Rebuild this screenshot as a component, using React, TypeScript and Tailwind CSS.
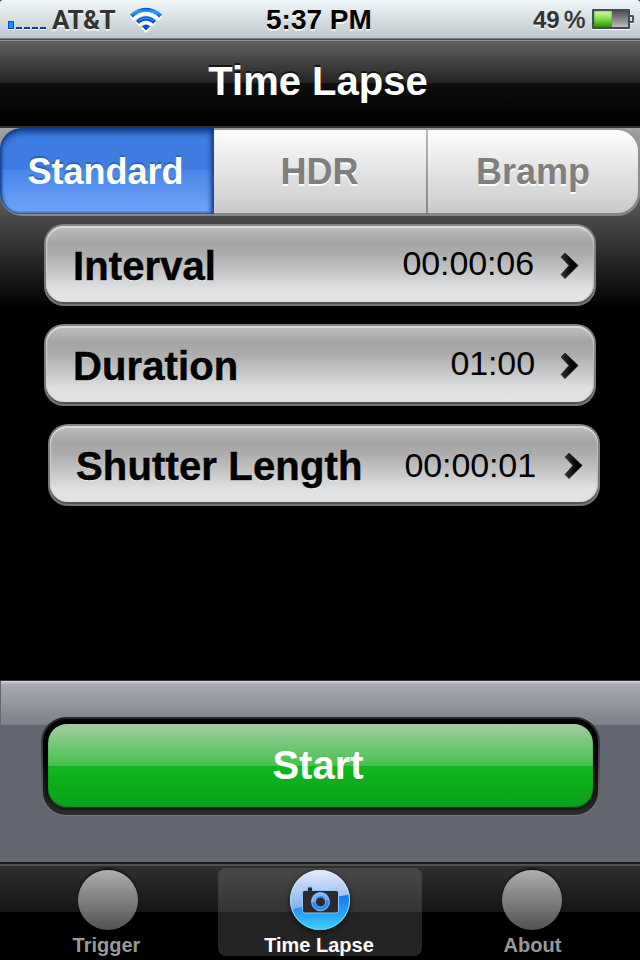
import React from "react";

function StatusBar() {
  return (
    <header className="relative h-[41px] w-full bg-linear-to-b from-[#eff7fb] to-[#bcc4c8] text-[#333]">
      <div className="flex h-[38px] w-full items-start">
        <div className="flex h-[29px] w-[46px] items-end gap-[2px] pl-2 drop-shadow-[0_1px_0_white]">
          <i className="h-2 w-[6px] border border-[#0752cb] bg-[#1590ff]" />
          <i className="h-[2px] w-[6px] bg-[#053cc8]" />
          <i className="h-[2px] w-[6px] bg-[#053cc8]" />
          <i className="h-[2px] w-[6px] bg-[#053cc8]" />
          <i className="h-[2px] w-[6px] bg-[#053cc8]" />
        </div>
        <span className="ml-[6px] mt-[5px] w-[78px] whitespace-nowrap font-['Roboto',sans-serif] text-[26px] font-bold leading-[30px] tracking-[-0.5px] [text-shadow:0_2px_0_#ffffffb0]">AT&amp;T</span>
        <svg className="mt-[7px] h-[26px] w-[34px]" viewBox="0 0 34 26">
          <defs>
            <linearGradient id="wave" gradientUnits="userSpaceOnUse" x1="0" y1="1" x2="0" y2="10">
              <stop stopColor="#0b49bd" /><stop offset=".35" stopColor="#2f9df2" /><stop offset=".7" stopColor="#2388ea" /><stop offset="1" stopColor="#0648c3" />
            </linearGradient>
          </defs>
          <g fill="white" transform="translate(0 2)">
            <path d="M0 8C9-1.500 23-1.500 32 8L28.500 12C21 4.500 11 4.500 3.500 12Z" />
            <path d="M5.500 13.500C12 7 20 7 26.500 13.500L22.500 17.500C19 14 13 14 9.500 17.500Z" />
            <path d="M11 19Q16 14 21 19L16 24Z" />
          </g>
          <path fill="url(#wave)" d="M0 7.500C9-1.500 23-1.500 32 7.500L29.200 10.500C21.500 3.200 10.500 3.200 2.800 10.500Z" />
          <path fill="#0b50cf" d="M6 14C12 7.800 20 7.800 26 14L23.200 16.800C19 12.800 13 12.800 8.800 16.800Z" />
          <path fill="none" stroke="#2190f7" strokeWidth="1.400" d="M8.800 13.600C13 10.400 19 10.400 23.200 13.600" />
          <path fill="#074cc4" d="M12 19.500C14.500 17 17.500 17 20 19.500L16 23.500Z" />
        </svg>
        <span className="ml-[102px] mt-[4px] w-[110px] whitespace-nowrap text-[28px] font-bold leading-[32px] text-black [text-shadow:0_2px_0_#ffffffb0]">5:37 PM</span>
        <div className="ml-[157px] mt-1 flex text-[24px] font-bold leading-[32px] [text-shadow:0_2px_0_#ffffffb0]">
          <span className="w-[31px]">49</span>
          <span className="w-[28px] font-normal [-webkit-text-stroke:0.6px_#333]">%</span>
        </div>
        <div className="mt-[9px] flex items-center drop-shadow-[0_1px_0_white]">
          <div className="flex h-5 w-[38px] rounded-[1px] border-2 border-[#444a5f] bg-linear-to-b from-[#535353] to-[#bababa]">
            <div className="h-4 w-[18px] bg-linear-to-b from-[#c9ffa0] via-[#80de42] to-[#2b9204] shadow-[inset_0_0_2px_#299404]" />
          </div>
          <div className="h-2 w-1 rounded-r-[2px] border-2 border-l-0 border-[#4a5064]" />
        </div>
      </div>
      <div className="h-px bg-[#7b8385]" />
      <div className="h-px bg-[#494e4f]" />
      <div className="h-px bg-[#909596]" />
      <svg className="absolute left-0 top-0 h-1 w-full" viewBox="0 0 640 4"><path d="M0 0H3Q0 0 0 3ZM640 0H637Q640 0 640 3Z" fill="#333" /></svg>
    </header>
  );
}

function Chevron() {
  return (
    <svg className="h-[28px] w-[20px]" viewBox="0 0 20 28">
      <defs><linearGradient id="chev"><stop stopColor="#333" /><stop offset=".7" stopColor="#000" /></linearGradient></defs>
      <path d="M5 1L18 13.500L5 26.500L1 22.500L9 13.500L1 5Z" fill="url(#chev)" stroke="url(#chev)" strokeWidth=".8" />
    </svg>
  );
}

function Row({ label, value, shifted = false, valueClass, labelClass }: { label: string; value: string; shifted?: boolean; valueClass: string; labelClass: string }) {
  return (
    <button className={`${shifted ? "ml-12" : "ml-11"} block h-[82px] w-[552px] rounded-[20px] bg-linear-to-b from-[#858585] to-[#747474] p-[2px] text-left text-black`}>
      <div className="h-full rounded-[18px] bg-[#525252] pb-[2px]">
        <div className="flex h-full items-center rounded-[18px] bg-[linear-gradient(#bfbfc1_0%,#a4a4a4_22%,#adadad_38%,#c8c8ca_62%,#dfe0e2_83%,#e3e4e6_100%)] pl-[26px] pr-[14px] shadow-[inset_0_2px_1px_#d9d9db,inset_1px_0_1px_#d0d0d1,inset_-1px_0_1px_#b8b8ba]">
          <span className={`mt-[3px] whitespace-nowrap text-[40px] font-bold leading-[46px] [-webkit-text-stroke:0.5px_black] [text-shadow:0_1px_1px_#ffffffa0] ${labelClass}`}>{label}</span>
          <span className={`ml-auto whitespace-nowrap text-[34px] leading-[40px] tracking-[-0.1px] ${valueClass}`}>{value}</span>
          <span className="mt-[4px]"><Chevron /></span>
        </div>
      </div>
    </button>
  );
}

function SegmentedControl() {
  return (
    <div className="flex h-[88px] w-full overflow-hidden rounded-[22px] bg-linear-to-b from-[#979797] to-[#858585] pb-[3px] text-[36px] font-bold">
      <button className="h-[86px] w-[214px] rounded-l-[21px] bg-[linear-gradient(#3e7ce2_0,#3e7ce2_48%,#4a87e9_49%,#6da2fa_96%,#3d6fc4_100%)] pr-[3px] pt-[1px] text-white shadow-[inset_0_5px_7px_-1px_#0c3282,inset_-4px_0_4px_-1px_#204e9c,inset_2px_0_2px_#2453a2]">
        <span className="[text-shadow:0_-2px_0_#244c9188]">Standard</span>
      </button>
      <button className="mt-[2px] h-[83px] w-[212px] bg-linear-to-b from-[#fdfdfd] to-[#cacaca] pr-[1px] text-[#7f7f7f]">
        <span className="[text-shadow:0_2px_0_white]">HDR</span>
      </button>
      <div className="mt-[2px] h-[83px] w-[2px] bg-linear-to-b from-[#bbb] to-[#888]" />
      <button className="mt-[2px] h-[83px] w-[210px] rounded-r-[21px] bg-linear-to-b from-[#fdfdfd] to-[#cacaca] text-[#7f7f7f]">
        <span className="[text-shadow:0_2px_0_white]">Bramp</span>
      </button>
    </div>
  );
}

function CameraBadge() {
  return (
    <svg className="h-[64px] w-[64px] overflow-visible" viewBox="0 0 64 64">
      <defs>
        <linearGradient id="sky" x1="0" y1="0" x2="0" y2="1"><stop stopColor="#e6ecfb" /><stop offset=".6" stopColor="#87b2ee" /><stop offset="1" stopColor="#6faff5" /></linearGradient>
        <linearGradient id="sea" x1="0" y1="0" x2="0" y2="1"><stop stopColor="#1775ef" /><stop offset=".5" stopColor="#269ffa" /><stop offset="1" stopColor="#42d8ff" /></linearGradient>
        <linearGradient id="rim" x1="0" y1="0" x2="0" y2="1"><stop stopColor="#e5edff" /><stop offset="1" stopColor="#4fdcf8" /></linearGradient>
        <clipPath id="disc"><circle cx="32" cy="32" r="30" /></clipPath>
      </defs>
      <g className="drop-shadow-[0_2px_3px_#000000aa]"><circle cx="32" cy="32" r="30" fill="url(#sky)" /></g>
      <path clipPath="url(#disc)" d="M0 43C12 38 24 39 38 33S54 28 64 26V64H0Z" fill="url(#sea)" />
      <circle cx="32" cy="32" r="29.500" fill="none" stroke="url(#rim)" />
      <path d="M16.500 22.500H19.500V19H24.500V22.500H48Q50.500 22.500 50.500 25V42.500Q50.500 45 48 45H17Q14.500 45 14.500 42.500V24.500Q14.500 22.500 16.500 22.500Z" fill="#292a2c" stroke="#91c5fb" />
      <circle cx="32.500" cy="34" r="7" fill="none" stroke="#258ef5" strokeWidth="4" />
      <path d="M25.500 34A7 7 0 0 1 39.500 32" fill="none" stroke="#7ab1f4" strokeWidth="4" />
      <circle cx="32.500" cy="34" r="8.800" fill="none" stroke="#9dc8fb" strokeWidth=".9" />
      <circle cx="32.500" cy="34" r="5" fill="none" stroke="#77b9fa" strokeWidth=".8" />
    </svg>
  );
}

function TabItem({ label, className, labelClass }: { label: string; className: string; labelClass: string }) {
  return (
    <button className={`flex flex-col items-center pt-[6px] text-[20px] font-bold leading-[24px] text-[#999] ${className}`}>
      <span className="h-[60px] w-[60px] rounded-full bg-linear-to-b from-[#afafaf] to-[#525252] shadow-[0_-2px_2px_#00000088]" />
      <span className={`mt-[3px] ${labelClass}`}>{label}</span>
    </button>
  );
}

export default function App() {
  return (
    <main className="flex h-[960px] w-[640px] flex-col overflow-hidden bg-black font-['Liberation_Sans',Arial,sans-serif]">
      <StatusBar />
      <div className="h-[85px] bg-[linear-gradient(#626262_0,#222_50%,#0e0e0e_50%,#000_100%)] pr-[4px] pt-[17px] text-center text-[40px] font-bold leading-[46px] text-white">
        <h1 className="[text-shadow:0_-2px_0_#00000099]">Time Lapse</h1>
      </div>
      <div className="h-[2px] bg-[#333]" />
      <section className="h-[552px] bg-[linear-gradient(#a3a3a3_0,#4a4a4a_88px,#000_180px)]">
        <SegmentedControl />
        <div className="mt-2 flex flex-col gap-[18px]">
          <Row label="Interval" value="00:00:06" labelClass="ml-[1px] tracking-[0.1px]" valueClass="mr-[26px] mb-[2px]" />
          <Row label="Duration" value="01:00" labelClass="ml-[1px] tracking-[0.1px]" valueClass="mr-[25px] mb-[2px]" />
          <Row label="Shutter Length" value="00:00:01" shifted labelClass="tracking-[0.15px]" valueClass="mr-[28px] mt-[1px]" />
        </div>
      </section>
      <section className="h-[182px] border-t border-[#343434] bg-[linear-gradient(#626670,#626670),linear-gradient(#e3e3e5_0,#b3b4b9_2px,#a6a8ae_4px,#7d8088_44px,#626670_44px)] bg-[length:1px_100%,100%_100%] bg-no-repeat pt-[36px]">
        <div className="ml-[41px] h-[99px] w-[559px] rounded-[25px] bg-linear-to-b from-[#252525] via-[#4c4c4c] to-[#777] p-[2px] pb-[1px]">
          <div className="h-full rounded-[23px] bg-linear-to-b from-[#000] to-[#2c2c2c] px-[5px] pt-[5px]">
            <button className="h-[84px] w-full rounded-[19px] bg-[linear-gradient(#a5cca2_0,#45c14d_50%,#0eb81c_50%,#0ca61b_87%,#0c9d20_100%)] pb-[2px] pr-[5px] text-[40px] font-bold text-white shadow-[0_0_1px_2px_#00000066,inset_0_-1px_1px_#063d0b]">Start</button>
          </div>
        </div>
      </section>
      <nav className="h-[98px] border-t-2 border-[#191919] bg-[linear-gradient(#505050_0,#505050_2px,#2f2f2f_2px,#161616_48px,#000_48px)]">
        <div className="flex">
          <TabItem label="Trigger" className="ml-[6px] w-[204px]" labelClass="mr-[3px]" />
          <button className="ml-[8px] mt-1 flex h-[88px] w-[204px] flex-col items-center rounded-[8px] bg-[linear-gradient(#494949_0,#333_50%,#242424_50%)] text-[20px] font-bold leading-[24px] text-white">
            <CameraBadge />
            <span className="mr-[2px] mt-[1px]">Time Lapse</span>
          </button>
          <TabItem label="About" className="ml-[8px] w-[204px]" labelClass="ml-[1px]" />
        </div>
      </nav>
    </main>
  );
}
